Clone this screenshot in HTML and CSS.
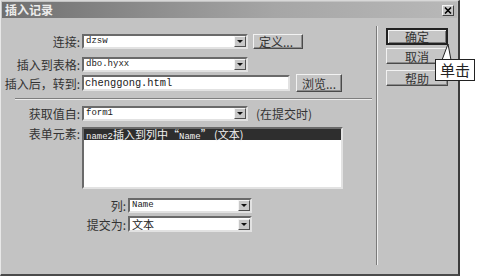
FILE: index.html
```html
<!DOCTYPE html>
<html lang="zh">
<head>
<meta charset="utf-8">
<title>插入记录</title>
<link rel="stylesheet" href="styles.css">
</head>
<body>
<div class="dialog">
  <div class="titlebar">
    <span class="title">插入记录</span>
    <span class="close"><svg width="8" height="7" viewBox="0 0 8 7"><path d="M1 0.5 L7 6.5 M7 0.5 L1 6.5" stroke="#000" stroke-width="1.6"/></svg></span>
  </div>
  <div class="body">
    <div class="main">
      <div class="row r1">
        <span class="lbl">连接:</span>
        <div class="select w166"><span class="val mono-s">dzsw</span><span class="arrow"></span></div>
        <span class="btn b-def">定义...</span>
      </div>
      <div class="row r2">
        <span class="lbl">插入到表格:</span>
        <div class="select w166"><span class="val mono-s">dbo.hyxx</span><span class="arrow"></span></div>
      </div>
      <div class="row r3">
        <span class="lbl">插入后，转到:</span>
        <div class="input"><span class="val mono-l">chenggong.html</span></div>
        <span class="btn b-browse">浏览...</span>
      </div>
      <div class="hsep"></div>
      <div class="row r4">
        <span class="lbl">获取值自:</span>
        <div class="select w166"><span class="val mono-s">form1</span><span class="arrow"></span></div>
        <span class="note">(在提交时)</span>
      </div>
      <div class="row r5">
        <span class="lbl">表单元素:</span>
        <div class="listbox">
          <div class="item sel"><span class="mono-s">name2</span>插入到列中“<span class="mono-s">Name</span>” (文本)</div>
        </div>
      </div>
      <div class="row r6">
        <span class="lbl lbl2">列:</span>
        <div class="select w124"><span class="val mono-s">Name</span><span class="arrow"></span></div>
      </div>
      <div class="row r7">
        <span class="lbl lbl2">提交为:</span>
        <div class="select w124"><span class="val cjk">文本</span><span class="arrow"></span></div>
      </div>
    </div>
    <div class="vsep"></div>
    <div class="side">
      <span class="btn sbtn primary">确定</span>
      <span class="btn sbtn s2">取消</span>
      <span class="btn sbtn s3">帮助</span>
    </div>
  </div>
  <div class="callout">
    <svg class="tail" width="16" height="17" viewBox="0 0 16 17"><path d="M3 17 L9 1 L12 17 Z" fill="#fff" stroke="#222" stroke-width="1"/></svg>
    <div class="cbox">单击</div>
  </div>
</div>
</body>
</html>
```
FILE: styles.css
```css
html, body {
  margin: 0;
  padding: 0;
  background: #ffffff;
}
body {
  width: 482px;
  height: 276px;
  overflow: hidden;
  font-family: "Noto Sans CJK SC", "Noto Sans", sans-serif;
  font-size: 12px;
  color: #222;
}
.dialog {
  position: relative;
  width: 460px;
  height: 276px;
  box-sizing: border-box;
  background: #c3c3c3;
  border-left: 1px solid #e8e8e8;
  border-top: 1px solid #d8d8d8;
  border-right: 2px solid #3c3c3c;
  border-bottom: 2px solid #4a4a4a;
}
.titlebar {
  height: 16px;
  margin: 1px 1px 0 1px;
  background: linear-gradient(to right, #6f6f6f, #a6a6a6 60%, #b8b8b8);
  display: flex;
  align-items: center;
  justify-content: space-between;
  padding: 0 3px 0 3px;
}
.title {
  color: #ececec;
  font-weight: bold;
  font-size: 12px;
  line-height: 16px;
}
.close {
  width: 12px;
  height: 11px;
  box-sizing: border-box;
  background: #c6c6c6;
  border: 1px solid;
  border-color: #f4f4f4 #404040 #404040 #f4f4f4;
  display: flex;
  align-items: center;
  justify-content: center;
}
.body {
  display: flex;
  align-items: flex-start;
}
.main {
  width: 375px;
  padding-top: 16px;
  display: flex;
  flex-direction: column;
}
.row {
  display: flex;
  align-items: center;
}
.lbl {
  width: 79px;
  flex: none;
  text-align: right;
  padding-right: 2px;
  white-space: nowrap;
  line-height: 15px;
  color: #333;
}
.lbl2 {
  width: 125px;
}
.r2 { margin-top: 8px; }
.r3 { margin-top: 2px; }
.r4 { margin-top: 5px; }
.r5 { margin-top: 5px; align-items: flex-start; }
.r6 { margin-top: 9px; }
.r7 { margin-top: 3px; }
.r5 .lbl { margin-top: -1px; }
.select, .input, .listbox {
  box-sizing: border-box;
  background: #ffffff;
  border: 2px solid;
  border-color: #6a6a6a #e2e2e2 #e2e2e2 #6a6a6a;
  display: flex;
  align-items: center;
  position: relative;
}
.select {
  height: 15px;
  padding-left: 2px;
}
.r7 .select { height: 16px; }
.w166 { width: 166px; }
.w124 { width: 124px; }
.val {
  flex: 1;
  white-space: nowrap;
  overflow: hidden;
  line-height: 11px;
}
.mono-s {
  font-family: "Liberation Mono", monospace;
  font-size: 9px;
  color: #1a1a1a;
}
.mono-l {
  font-family: "Liberation Mono", monospace;
  font-size: 10.4px;
  color: #222;
}
.val.cjk {
  font-size: 11px;
  line-height: 12px;
  overflow: visible;
}
.arrow {
  width: 12px;
  height: 11px;
  box-sizing: border-box;
  background: #c8c8c8;
  border: 1px solid;
  border-color: #f4f4f4 #505050 #505050 #f4f4f4;
  position: relative;
  flex: none;
}
.arrow::after {
  content: "";
  position: absolute;
  left: 2px;
  top: 3px;
  border-left: 3px solid transparent;
  border-right: 3px solid transparent;
  border-top: 3px solid #111;
}
.input {
  width: 208px;
  height: 16px;
  padding-left: 1px;
}
.btn {
  box-sizing: border-box;
  background: #c6c6c6;
  border: 1px solid;
  border-color: #f2f2f2 #4a4a4a #4a4a4a #f2f2f2;
  box-shadow: inset -1px -1px 0 #8c8c8c;
  display: flex;
  align-items: center;
  justify-content: center;
  color: #333;
  font-size: 12px;
  white-space: nowrap;
}
.b-def {
  width: 50px;
  height: 15px;
  margin-left: 5px;
  justify-content: flex-start;
  padding-left: 5px;
}
.b-browse {
  width: 46px;
  height: 18px;
  margin-left: 6px;
}
.hsep {
  margin: 6px 4px 0 14px;
  height: 1px;
  background: #7e7e7e;
  border-bottom: 1px solid #ececec;
}
.note {
  margin-left: 8px;
  color: #333;
}
.listbox {
  width: 261px;
  height: 62px;
  flex-direction: column;
  align-items: stretch;
  justify-content: flex-start;
  padding: 0;
}
.item {
  height: 11px;
  line-height: 11px;
  font-size: 11px;
  padding-left: 2px;
  white-space: nowrap;
}
.item.sel {
  background: #2e2e2e;
  color: #f2f2f2;
}
.item.sel .mono-s {
  color: #f2f2f2;
}
.vsep {
  width: 1px;
  height: 239px;
  margin-top: 8px;
  background: #7a7a7a;
  border-right: 1px solid #eeeeee;
}
.side {
  padding-left: 8px;
  padding-top: 10px;
  display: flex;
  flex-direction: column;
}
.sbtn {
  width: 62px;
  height: 16px;
}
.primary {
  border: 2px solid #222;
  box-shadow: inset 1px 1px 0 #f2f2f2, inset -1px -1px 0 #7a7a7a;
  height: 17px;
}
.s2 { margin-top: 3px; }
.s3 { margin-top: 6px; }
.callout {
  position: absolute;
  left: 434px;
  top: 42px;
  width: 42px;
  height: 40px;
}
.tail {
  position: absolute;
  left: 4px;
  top: 0;
}
.cbox {
  position: absolute;
  left: 0;
  top: 16px;
  width: 40px;
  height: 22px;
  box-sizing: border-box;
  background: #ffffff;
  border: 1px solid #222;
  font-size: 15px;
  line-height: 20px;
  text-align: center;
  color: #222;
}
```
